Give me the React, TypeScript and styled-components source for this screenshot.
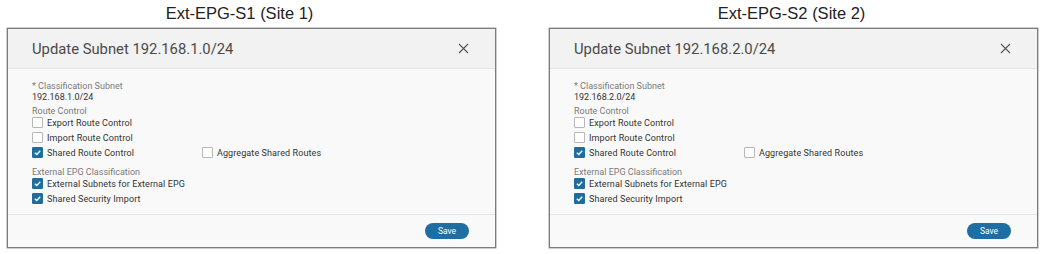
import React from 'react';
import styled, { createGlobalStyle } from 'styled-components';

const GlobalStyle = createGlobalStyle`
  html, body {
    margin: 0;
    padding: 0;
    background: #ffffff;
  }
  body {
    font-family: Roboto, "Liberation Sans", Arial, sans-serif;
    color: #333;
  }
`;

type Site = {
  title: string;
  subnet: string;
  titleShift: number;
};

const sites: Site[] = [
  { title: 'Ext-EPG-S1 (Site 1)', subnet: '192.168.1.0/24', titleShift: 24 },
  { title: 'Ext-EPG-S2 (Site 2)', subnet: '192.168.2.0/24', titleShift: 4 },
];

const Check: React.FC<{ checked?: boolean; label: string }> = ({ checked, label }) => (
  <CheckRow>
    <Box $checked={checked}>
      {checked && (
        <svg width="9" height="9" viewBox="0 0 10 10">
          <polyline points="2,5.2 4.2,7.2 8,3" fill="none" stroke="#fff" strokeWidth="1.5" />
        </svg>
      )}
    </Box>
    <span>{label}</span>
  </CheckRow>
);

const SubnetDialog: React.FC<{ site: Site }> = ({ site }) => (
  <Column>
    <SiteTitle $shift={site.titleShift}>{site.title}</SiteTitle>
    <Dialog>
      <Header>
        <span>Update Subnet {site.subnet}</span>
        <svg width="11" height="11" viewBox="0 0 11 11">
          <path d="M1 1 L10 10 M10 1 L1 10" stroke="#555" strokeWidth="1.1" />
        </svg>
      </Header>
      <Body>
        <FieldLabel>* Classification Subnet</FieldLabel>
        <Value>{site.subnet}</Value>
        <FieldLabel $top={5}>Route Control</FieldLabel>
        <Check label="Export Route Control" />
        <Check label="Import Route Control" />
        <Pair>
          <Check checked label="Shared Route Control" />
          <Check label="Aggregate Shared Routes" />
        </Pair>
        <FieldLabel $top={8}>External EPG Classification</FieldLabel>
        <Check checked label="External Subnets for External EPG" />
        <Check checked label="Shared Security Import" />
      </Body>
      <Footer>
        <SaveButton>Save</SaveButton>
      </Footer>
    </Dialog>
  </Column>
);

const App: React.FC = () => (
  <>
    <GlobalStyle />
    <Page>
      {sites.map((s) => (
        <SubnetDialog key={s.title} site={s} />
      ))}
    </Page>
  </>
);

const Page = styled.div`
  display: flex;
  gap: 53px;
  padding: 0 0 0 7px;
  width: 1044px;
  height: 254px;
  box-sizing: border-box;
`;

const Column = styled.div`
  display: flex;
  flex-direction: column;
  width: 489px;
`;

const SiteTitle = styled.div<{ $shift: number }>`
  height: 28px;
  line-height: 27px;
  text-align: center;
  padding-right: ${(p) => p.$shift}px;
  font-family: "Liberation Sans", Arial, sans-serif;
  font-size: 16.5px;
  color: #222;
`;

const Dialog = styled.div`
  display: flex;
  flex-direction: column;
  height: 220px;
  border: 1px solid #7c7c7c;
  box-shadow: 0 0 0 0.5px #a0a0a0;
  box-sizing: border-box;
  background: #f9f9f9;
`;

const Header = styled.div`
  display: flex;
  align-items: center;
  justify-content: space-between;
  height: 40px;
  padding: 0 26px 0 24px;
  background: #f2f2f2;
  border-bottom: 1px solid #e4e4e4;
  font-size: 14.8px;
  color: #4a4a4a;
  box-sizing: border-box;
`;

const Body = styled.div`
  display: flex;
  flex-direction: column;
  flex: 1;
  padding: 13px 0 0 24px;
  border-bottom: 1px solid #e6e6e6;
`;

const FieldLabel = styled.div<{ $top?: number }>`
  margin-top: ${(p) => p.$top ?? 0}px;
  font-size: 9px;
  line-height: 8px;
  color: #7a7a7a;
`;

const Value = styled.div`
  margin-top: 2px;
  font-size: 9px;
  line-height: 10px;
  color: #333;
`;

const Pair = styled.div`
  display: grid;
  grid-template-columns: 170px auto;
`;

const CheckRow = styled.div`
  display: flex;
  align-items: center;
  gap: 4px;
  height: 15px;
  font-size: 9px;
  font-weight: 400;
  letter-spacing: 0.1px;
  color: #333;
`;

const Box = styled.span<{ $checked?: boolean }>`
  display: flex;
  align-items: center;
  justify-content: center;
  width: 11px;
  height: 11px;
  box-sizing: border-box;
  border-radius: 1px;
  border: 1px solid ${(p) => (p.$checked ? '#1f6c9e' : '#b8b8b8')};
  background: ${(p) => (p.$checked ? '#1f6c9e' : '#fff')};
`;

const Footer = styled.div`
  display: flex;
  align-items: center;
  justify-content: flex-end;
  height: 32px;
  padding-right: 26px;
`;

const SaveButton = styled.button`
  width: 44px;
  height: 16px;
  border: none;
  border-radius: 8px;
  background: #1e6ea3;
  color: #fff;
  font-family: Roboto, "Liberation Sans", Arial, sans-serif;
  font-size: 8.5px;
  padding: 0;
`;

export default App;
